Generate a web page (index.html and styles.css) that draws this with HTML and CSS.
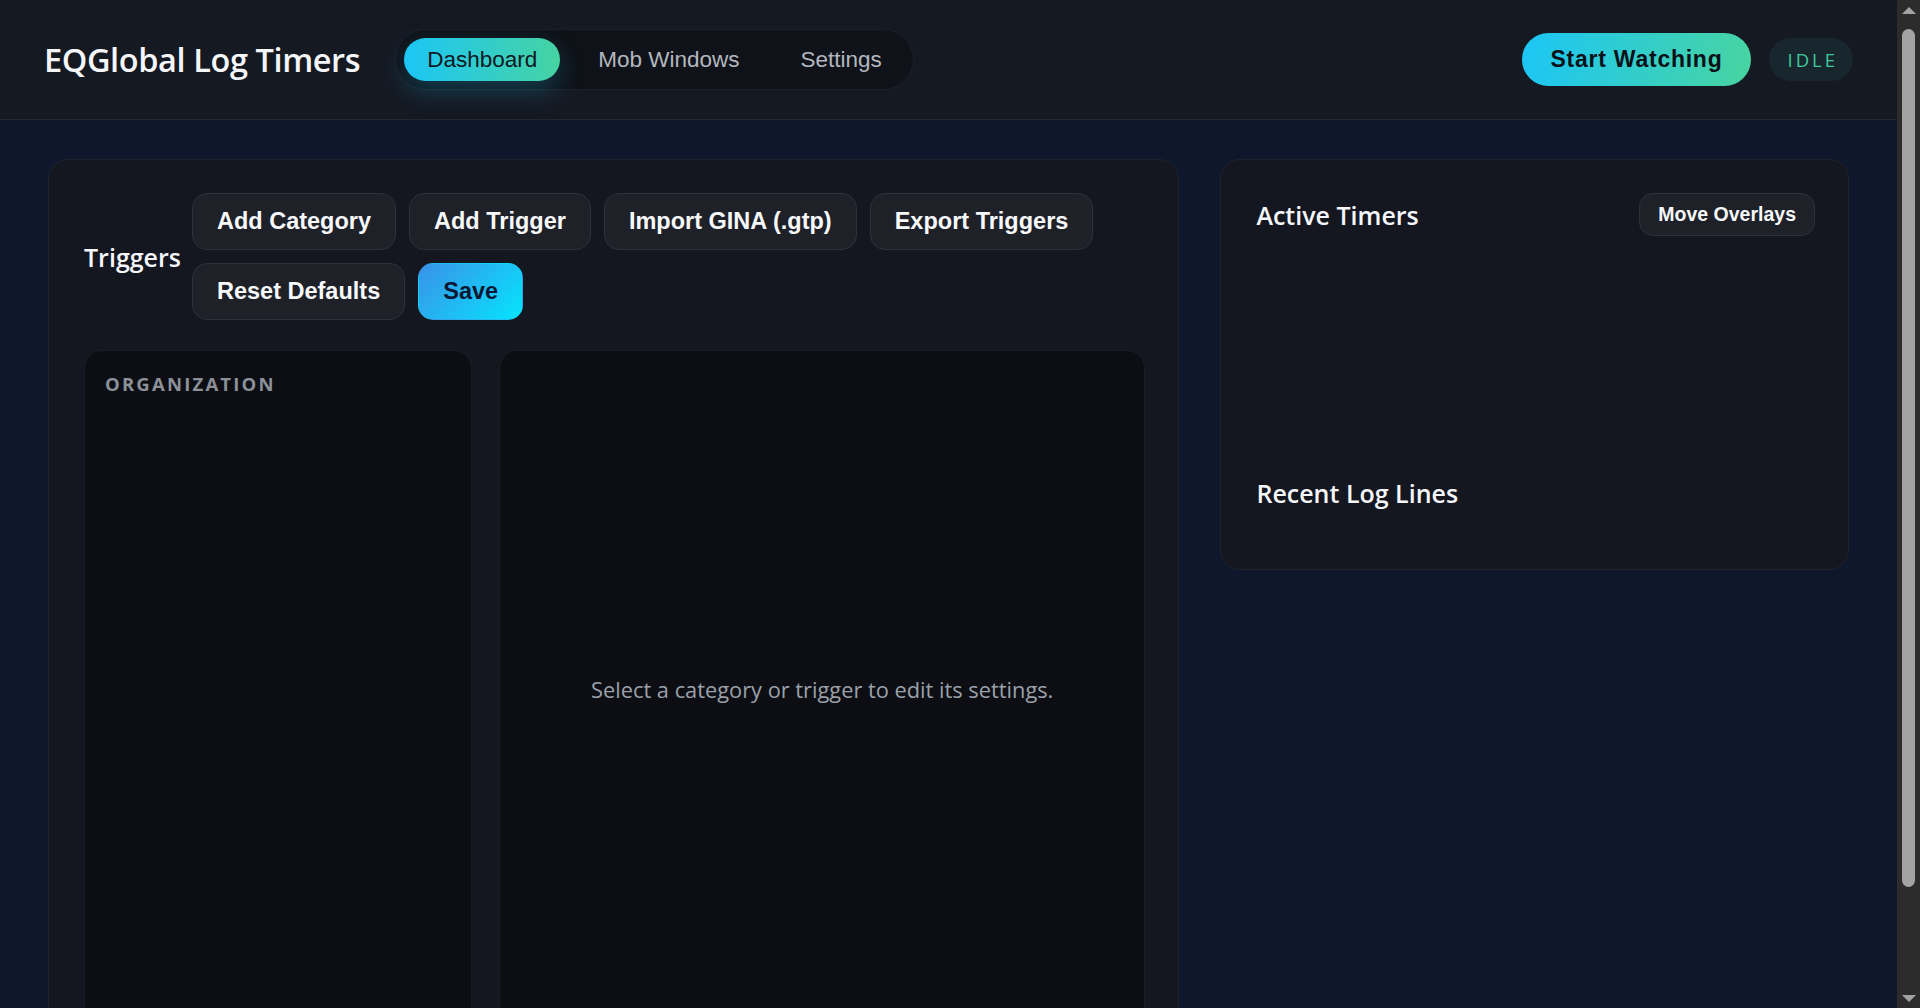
FILE: index.html
```html
<!DOCTYPE html>
<html lang="en">
<head>
<meta charset="utf-8">
<title>EQGlobal Log Timers</title>
<link rel="stylesheet" href="styles.css">
</head>
<body>
<div class="page">
<header class="topbar">
  <div class="brand-group">
    <h1 class="brand">EQGlobal Log Timers</h1>
    <nav class="tabs">
      <button class="tab tab-active">Dashboard</button>
      <button class="tab">Mob Windows</button>
      <button class="tab">Settings</button>
    </nav>
  </div>
  <div class="status-group">
    <button class="watch-btn">Start Watching</button>
    <span class="status-badge">IDLE</span>
  </div>
</header>

<main class="layout">
  <section class="panel triggers-panel">
    <div class="toolbar">
      <h2 class="panel-title">Triggers</h2>
      <div class="actions">
        <button class="btn">Add Category</button>
        <button class="btn">Add Trigger</button>
        <button class="btn">Import GINA (.gtp)</button>
        <button class="btn">Export Triggers</button>
        <button class="btn">Reset Defaults</button>
        <button class="btn btn-primary">Save</button>
      </div>
    </div>
    <div class="editor-grid">
      <div class="subpanel org-panel">
        <div class="section-label">ORGANIZATION</div>
      </div>
      <div class="subpanel editor-panel">
        <p class="placeholder">Select a category or trigger to edit its settings.</p>
      </div>
    </div>
  </section>

  <aside class="panel side-panel">
    <div class="side-head">
      <h2 class="panel-title">Active Timers</h2>
      <button class="btn btn-small">Move Overlays</button>
    </div>
    <div class="timer-list"></div>
    <h2 class="panel-title">Recent Log Lines</h2>
    <div class="log-list"></div>
  </aside>
</main>
</div>
<div class="scrollbar" aria-hidden="true">
  <span class="sb-arrow sb-up"></span>
  <span class="sb-thumb"></span>
  <span class="sb-arrow sb-down"></span>
</div>
</body>
</html>
```

FILE: styles.css
```css
*, *::before, *::after {
  box-sizing: border-box;
}
html {
  background: #0e172b;
}
body {
  margin: 0;
  background: #0e172b;
  color: #f2f4f8;
  font-family: "Open Sans", "Noto Sans", sans-serif;
}
.page {
  margin-right: 23px;
}
button {
  font-family: "Liberation Sans", Arial, sans-serif;
  cursor: pointer;
}

/* Header */
.topbar {
  height: 120px;
  border-bottom: 1px solid #222734;
  background: #151922;
  display: flex;
  align-items: center;
  justify-content: space-between;
  padding: 0 44px;
}
.brand-group {
  display: flex;
  align-items: center;
  gap: 35px;
}
.brand {
  margin: 0;
  font-size: 32.5px;
  font-weight: 600;
  letter-spacing: -0.4px;
  color: #f5f6fa;
}
.tabs {
  display: flex;
  gap: 15px;
  padding: 8px;
  border: 1px solid #1d2029;
  border-radius: 999px;
  background: #0f1218;
}
.tab {
  height: 43px;
  padding: 0 23px;
  border: none;
  border-radius: 999px;
  background: transparent;
  color: #b3b7bf;
  font-size: 22.5px;
}
.tab-active {
  background: linear-gradient(90deg, #1cc6f6, #46d3a2);
  color: #0c1822;
  box-shadow: 0 10px 26px rgba(28, 170, 220, 0.28);
}
.status-group {
  display: flex;
  align-items: center;
  gap: 18px;
}
.watch-btn {
  height: 53px;
  padding: 0 29px;
  border: none;
  border-radius: 999px;
  background: linear-gradient(100deg, #1cc6f6, #48d4a0);
  color: #0a1119;
  font-size: 23px;
  font-weight: 700;
  letter-spacing: 0.75px;
}
.status-badge {
  height: 43px;
  padding: 0 15px 0 18px;
  display: flex;
  align-items: center;
  border-radius: 999px;
  background: #18272e;
  color: #3fc99b;
  font-size: 18.5px;
  letter-spacing: 3px;
}

/* Layout */
.layout {
  display: grid;
  grid-template-columns: 1.8fr 1fr;
  gap: 41px;
  align-items: start;
  padding: 39px 48px 79px;
}
.panel {
  background: #141720;
  border: 1px solid #1f232c;
  border-radius: 20px;
  padding: 33px 33px 33px 35px;
}
.panel-title {
  margin: 0;
  font-size: 25px;
  font-weight: 600;
  color: #f5f6fa;
}

/* Triggers */
.toolbar {
  display: flex;
  align-items: center;
  gap: 11px;
}
.actions {
  display: flex;
  flex-wrap: wrap;
  gap: 13px;
}
.btn {
  padding: 14px 24px;
  line-height: 27px;
  border: 1px solid #2e313a;
  border-radius: 15px;
  background: #1f2129;
  color: #f7f8fa;
  font-size: 23.5px;
  font-weight: 700;
}
.btn-primary {
  border-color: transparent;
  background: linear-gradient(135deg, #3a92e9, #06e4fc);
  color: #0b1833;
}
.editor-grid {
  display: grid;
  grid-template-columns: 388px 1fr;
  gap: 27px;
  margin-top: 30px;
}
.subpanel {
  background: #0c0e13;
  border: 1px solid #1a1d24;
  border-radius: 18px;
  min-height: 678px;
}
.org-panel {
  padding: 20px;
}
.section-label {
  font-size: 18.5px;
  font-weight: 700;
  letter-spacing: 2.2px;
  color: #8b9099;
}
.editor-panel {
  display: flex;
  align-items: center;
  justify-content: center;
}
.placeholder {
  margin: 0;
  font-size: 21.8px;
  color: #9ba1aa;
}

/* Side panel */
.side-head {
  display: flex;
  align-items: center;
  justify-content: space-between;
}
.btn-small {
  padding: 9px 18px;
  line-height: 23px;
  border-radius: 14px;
  font-size: 19.5px;
}
.timer-list {
  height: 240px;
}
.log-list {
  height: 26px;
}

/* Window scrollbar (drawn over the page edge) */
.scrollbar {
  position: fixed;
  top: 0;
  right: 0;
  width: 23px;
  height: 100vh;
  background: #2c2c2c;
  display: flex;
  flex-direction: column;
  align-items: center;
}
.sb-arrow {
  width: 0;
  height: 0;
  border-left: 7px solid transparent;
  border-right: 7px solid transparent;
}
.sb-up {
  margin-top: 7px;
  border-bottom: 7px solid #a3a3a3;
}
.sb-down {
  margin-top: auto;
  margin-bottom: 6px;
  border-top: 7px solid #a3a3a3;
}
.sb-thumb {
  width: 13px;
  height: 858px;
  margin-top: 15px;
  border-radius: 7px;
  background: #a3a3a3;
}
```
